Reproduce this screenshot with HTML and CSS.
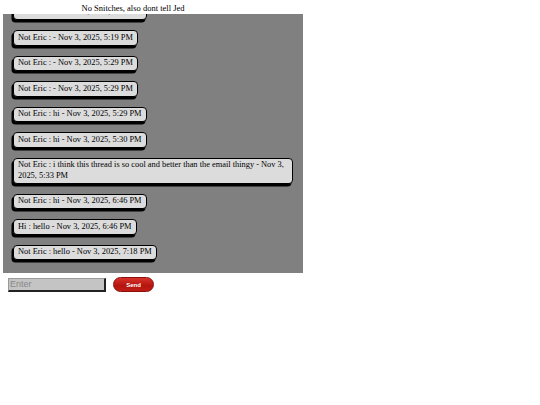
FILE: index.html
```html
<!DOCTYPE html>
<html>
<head>
<meta charset="utf-8">
<link rel="stylesheet" href="styles.css">
</head>
<body>
<div class="page">
  <div class="title">No Snitches, also dont tell Jed</div>
  <div class="thread">
    <div class="msg">Not Eric : hi - Nov 3, 2025, 5:12 PM</div>
    <div class="msg">Not Eric : - Nov 3, 2025, 5:19 PM</div>
    <div class="msg">Not Eric : - Nov 3, 2025, 5:29 PM</div>
    <div class="msg">Not Eric : - Nov 3, 2025, 5:29 PM</div>
    <div class="msg">Not Eric : hi - Nov 3, 2025, 5:29 PM</div>
    <div class="msg">Not Eric : hi - Nov 3, 2025, 5:30 PM</div>
    <div class="msg">Not Eric : i think this thread is so cool and better than the email thingy - Nov 3, 2025, 5:33 PM</div>
    <div class="msg">Not Eric : hi - Nov 3, 2025, 6:46 PM</div>
    <div class="msg">Hi : hello - Nov 3, 2025, 6:46 PM</div>
    <div class="msg">Not Eric : hello - Nov 3, 2025, 7:18 PM</div>
  </div>
  <div class="composer">
    <input class="entry" type="text" placeholder="Enter">
    <button class="send">Send</button>
  </div>
</div>
</body>
</html>
```
FILE: styles.css
```css
html, body {
  margin: 0;
  padding: 0;
  background: #fff;
}
.page {
  font-family: "Liberation Serif", serif;
  color: #000;
}
.title {
  width: 266px;
  text-align: center;
  font-size: 8.5px;
  height: 14px;
  line-height: 14px;
  padding-top: 1px;
  box-sizing: border-box;
}
.thread {
  margin-left: 3px;
  width: 300px;
  height: 259px;
  background: #808080;
  overflow: hidden;
  display: flex;
  flex-direction: column;
  justify-content: flex-end;
  align-items: flex-start;
  gap: 10px;
  padding: 0 10px 13px 10px;
  box-sizing: border-box;
  font-size: 8.4px;
}
.msg {
  flex: none;
  background: #dcdcdc;
  border: 1.5px solid #000;
  border-radius: 4px;
  box-shadow: -1.5px 2.5px 0 #000;
  padding: 1.5px 4px;
  line-height: 10.5px;
}
.composer {
  display: flex;
  align-items: center;
  gap: 7px;
  padding: 4px 0 0 8px;
}
.entry {
  width: 98px;
  height: 14px;
  box-sizing: border-box;
  background: #c4c4c4;
  border: 1px solid #000;
  border-top-color: #999;
  border-left-color: #999;
  border-right: 2px solid #222;
  border-bottom: 2px solid #222;
  font-family: "Liberation Sans", sans-serif;
  font-size: 9px;
  padding: 0 1px;
  margin: 0;
}
.entry::placeholder {
  color: #888;
}
.send {
  width: 41px;
  height: 15px;
  border: 1px solid #8a0f0a;
  border-radius: 8px;
  background: linear-gradient(#d8322a, #b3150f 60%, #c01d16);
  color: #fff;
  font-family: "Liberation Sans", sans-serif;
  font-weight: bold;
  font-size: 6px;
  padding: 0;
  margin: 0;
}
```
